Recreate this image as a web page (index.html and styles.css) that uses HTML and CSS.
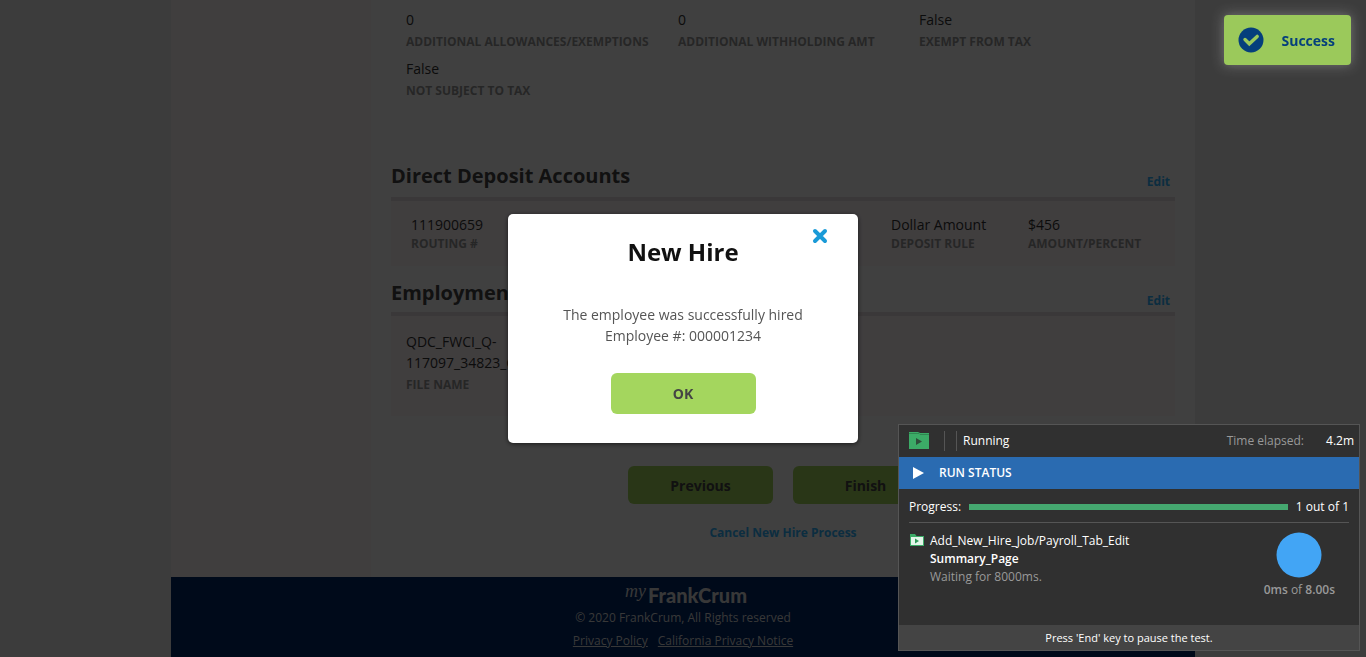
FILE: index.html
```html
<!DOCTYPE html>
<html lang="en">
<head>
  <meta charset="utf-8">
  <title>New Hire</title>
  <link rel="stylesheet" href="styles.css">
</head>
<body>
  <div class="page">
    <div class="columns">
      <aside class="sidebar"></aside>
      <main class="content">
        <dl class="tax-fields">
          <div><dd>0</dd><dt>ADDITIONAL ALLOWANCES/EXEMPTIONS</dt></div>
          <div><dd>0</dd><dt>ADDITIONAL WITHHOLDING AMT</dt></div>
          <div><dd>False</dd><dt>EXEMPT FROM TAX</dt></div>
          <div><dd>False</dd><dt>NOT SUBJECT TO TAX</dt></div>
        </dl>

        <section class="section">
          <header class="section-head">
            <h2>Direct Deposit Accounts</h2>
            <a class="edit" href="#">Edit</a>
          </header>
          <dl class="card deposit">
            <div><dd>111900659</dd><dt>ROUTING #</dt></div>
            <div><dd>Dollar Amount</dd><dt>DEPOSIT RULE</dt></div>
            <div><dd>$456</dd><dt>AMOUNT/PERCENT</dt></div>
          </dl>
        </section>

        <section class="section">
          <header class="section-head">
            <h2>Employment</h2>
            <a class="edit" href="#">Edit</a>
          </header>
          <dl class="card files">
            <div><dd>QDC_FWCI_Q-<br>117097_34823_C</dd><dt>FILE NAME</dt></div>
          </dl>
        </section>

        <div class="actions">
          <button class="btn" type="button">Previous</button>
          <button class="btn" type="button">Finish</button>
        </div>
        <a class="cancel" href="#">Cancel New Hire Process</a>
      </main>
    </div>
    <footer class="footer">
      <div class="logo"><span class="logo-my">my</span><span class="logo-name">FrankCrum</span></div>
      <p>© 2020 FrankCrum, All Rights reserved</p>
      <nav class="legal">
        <a href="#">Privacy Policy</a>
        <a href="#">California Privacy Notice</a>
      </nav>
    </footer>
  </div>

  <div class="overlay">
    <div class="dialog" role="dialog" aria-labelledby="dialog-title">
      <button class="close" type="button" aria-label="Close">
        <svg width="16" height="16" viewBox="0 0 16 16"><path d="M3 3l10 10M13 3L3 13" stroke="#1a9ad7" stroke-width="4" stroke-linecap="round"/></svg>
      </button>
      <h1 id="dialog-title">New Hire</h1>
      <p>The employee was successfully hired<br>Employee #: 000001234</p>
      <button class="btn ok" type="button">OK</button>
    </div>
  </div>

  <div class="toast" role="status">
    <svg width="26" height="26" viewBox="0 0 26 26"><circle cx="13" cy="13" r="12.5" fill="#053f7c"/><path d="M7 12.500l4.300 4.300 7.900-7.400" fill="none" stroke="#9bc95b" stroke-width="3.400" stroke-linecap="round"/></svg>
    <span>Success</span>
  </div>

  <aside class="runner">
    <header class="runner-head">
      <svg width="20" height="18" viewBox="0 0 20 18"><path d="M0 0h9l2 1h9v16H0z" fill="#3cab67"/><path d="M0 1.500h10l1 1h9" fill="none" stroke="#2f8751"/><path d="M7 6v7l6-3.500z" fill="#2f4d3a"/></svg>
      <span class="runner-grip"></span>
      <span>Running</span>
      <span class="elapsed">Time elapsed:</span>
      <span>4.2m</span>
    </header>
    <div class="runner-status">
      <svg width="12" height="12" viewBox="0 0 12 12"><path d="M1 0v12l11-6z" fill="#fff"/></svg>
      <span>RUN STATUS</span>
    </div>
    <div class="runner-progress">
      <label for="run-progress">Progress:</label>
      <progress id="run-progress" value="1" max="1"></progress>
      <span>1 out of 1</span>
    </div>
    <div class="runner-body">
      <svg class="step-icon" width="14" height="12" viewBox="0 0 14 12"><path d="M0 0h5l1.500 2H14v10H0z" fill="#3cab67"/><path d="M1 3h12v8H1z" fill="#e4f6ea"/><path d="M5 4.500v5L9 7z" fill="#2f9a59"/></svg>
      <div class="step">
        <div>Add_New_Hire_Job/Payroll_Tab_Edit</div>
        <div class="step-name">Summary_Page</div>
        <div class="muted">Waiting for 8000ms.</div>
      </div>
      <div class="timer">
        <svg width="46" height="46" viewBox="0 0 46 46"><circle cx="23" cy="23" r="22.500" fill="#42a5f5"/></svg>
        <div><b>0ms</b> of <b>8.00s</b></div>
      </div>
    </div>
    <footer class="runner-foot">Press 'End' key to pause the test.</footer>
  </aside>
</body>
</html>
```
FILE: styles.css
```css
* { box-sizing: border-box; }

body {
  margin: 0;
  background: #f0f0f0;
  color: #444;
  font: 14px/21px "Open Sans", sans-serif;
}

h1, h2, p, dl, dt, dd { margin: 0; }
button { font: inherit; border: 0; cursor: pointer; }

.page {
  max-width: 1024px;
  min-height: 100vh;
  margin: 0 auto;
  display: flex;
  flex-direction: column;
  background: #fff;
}
.columns { display: flex; }
.sidebar { flex: 0 0 200px; background: #fff5f8; }
.content {
  flex: 1;
  display: flex;
  flex-direction: column;
  padding: 9px 20px 34px;
}

dl > div { display: flex; flex-direction: column; }
dt { color: #999; font-size: 12px; line-height: 23px; font-weight: 700; }
dd { color: #333; }

.tax-fields {
  display: grid;
  grid-template-columns: 272px 241px 1fr;
  row-gap: 5px;
  padding: 0 15px;
  margin-bottom: 59px;
}

.section { margin-bottom: 12px; }
.section-head {
  display: flex;
  justify-content: space-between;
  align-items: flex-start;
  height: 36px;
  padding-right: 5px;
}
.section + .section .section-head { height: 34px; }
h2 { color: #444; font-size: 20px; line-height: 30px; font-weight: 700; }
.edit, .cancel { color: #30b4ff; font-size: 12px; font-weight: 700; text-decoration: none; }
.edit { padding-top: 10px; }
.section + .section .edit { padding-top: 12px; }

.card { border-top: 4px solid #e8dee2; background: #fff5f8; }
.deposit {
  display: grid;
  grid-template-columns: 1fr 137px 127px;
  padding: 13px 20px;
}
.deposit dt { line-height: 18px; }
.files { padding: 15px 15px 20px; }

.actions { display: flex; justify-content: center; gap: 20px; margin-top: 38px; }
.btn {
  width: 145px;
  height: 38px;
  border-radius: 6px;
  background: #a4d65e;
  color: #444;
  font-weight: 700;
}
.cancel { align-self: center; margin-top: 18px; }

.footer {
  flex: 1;
  display: flex;
  flex-direction: column;
  align-items: center;
  background: #002868;
  color: #ddd;
  font-size: 12px;
  padding-top: 6px;
}
.footer p { line-height: 22px; padding-top: 2px; }
.logo { display: flex; align-items: flex-start; gap: 2px; height: 22px; padding-left: 6px; line-height: 24px; }
.logo-my { font: italic 18px/16px "Liberation Serif", serif; }
.logo-name { font-family: Lato, sans-serif; font-size: 20px; font-weight: 900; }
.legal { display: flex; gap: 10px; line-height: 24px; }
.legal a { color: inherit; }

.overlay {
  position: fixed;
  inset: 0;
  display: flex;
  align-items: center;
  justify-content: center;
  background: rgba(0, 0, 0, 0.75);
}
.dialog {
  position: relative;
  width: 350px;
  padding: 20px 24px 29px;
  border-radius: 5px;
  background: #fff;
  color: #555;
  text-align: center;
  box-shadow: 0 1px 5px rgba(0, 0, 0, 0.6);
}
.dialog h1 { color: #111; font-size: 24px; line-height: 36px; font-weight: 700; }
.dialog p { margin: 34px 0 27px; }
.dialog .ok { height: 41px; }
.close {
  position: absolute;
  top: 14px;
  right: 30px;
  padding: 0;
  background: none;
  line-height: 0;
}

.toast {
  position: fixed;
  top: 15px;
  right: 15px;
  display: flex;
  align-items: center;
  gap: 18px;
  height: 50px;
  padding: 0 16px 0 14px;
  border-radius: 4px;
  background: #9bc95b;
  color: #053f7c;
  font-weight: 700;
  box-shadow: 0 0 12px #777;
}

.runner {
  position: fixed;
  right: 6px;
  bottom: 6px;
  width: 462px;
  border: 1px solid #555;
  background: #303030;
  color: #fff;
  font: 12px/18px "Open Sans", sans-serif;
}
.runner-head { display: flex; align-items: center; height: 32px; padding: 0 5px 0 10px; }
.runner-grip {
  width: 13px;
  height: 20px;
  margin: 0 6px 0 15px;
  border: solid #555;
  border-width: 0 1px;
}
.elapsed { margin: 0 22px 0 auto; color: #999; }
.runner-status {
  display: flex;
  align-items: center;
  gap: 15px;
  height: 32px;
  padding-left: 13px;
  background: #2a6bb1;
  font-weight: 600;
}
.runner-progress {
  display: flex;
  align-items: center;
  gap: 8px;
  height: 34px;
  margin: 0 10px;
  padding-top: 2px;
  border-bottom: 1px solid #555;
}
progress {
  flex: 1;
  min-width: 0;
  height: 6px;
  appearance: none;
  border: 0;
  background: #555;
}
progress::-webkit-progress-bar { background: #555; }
progress::-webkit-progress-value { background: #45a870; }
.runner-body { display: flex; height: 102px; padding: 9px 24px 0 11px; }
.step-icon { margin: 2px 6px 0 0; }
.step { flex: 1; }
.step-name { font-weight: 600; }
.muted, .timer { color: #999; }
.timer { display: flex; flex-direction: column; align-items: center; }
.timer div { padding-top: 3px; }
.timer b { font-weight: 600; }
.runner-foot { height: 25px; line-height: 25px; background: #444; text-align: center; font-size: 11px; }
```
